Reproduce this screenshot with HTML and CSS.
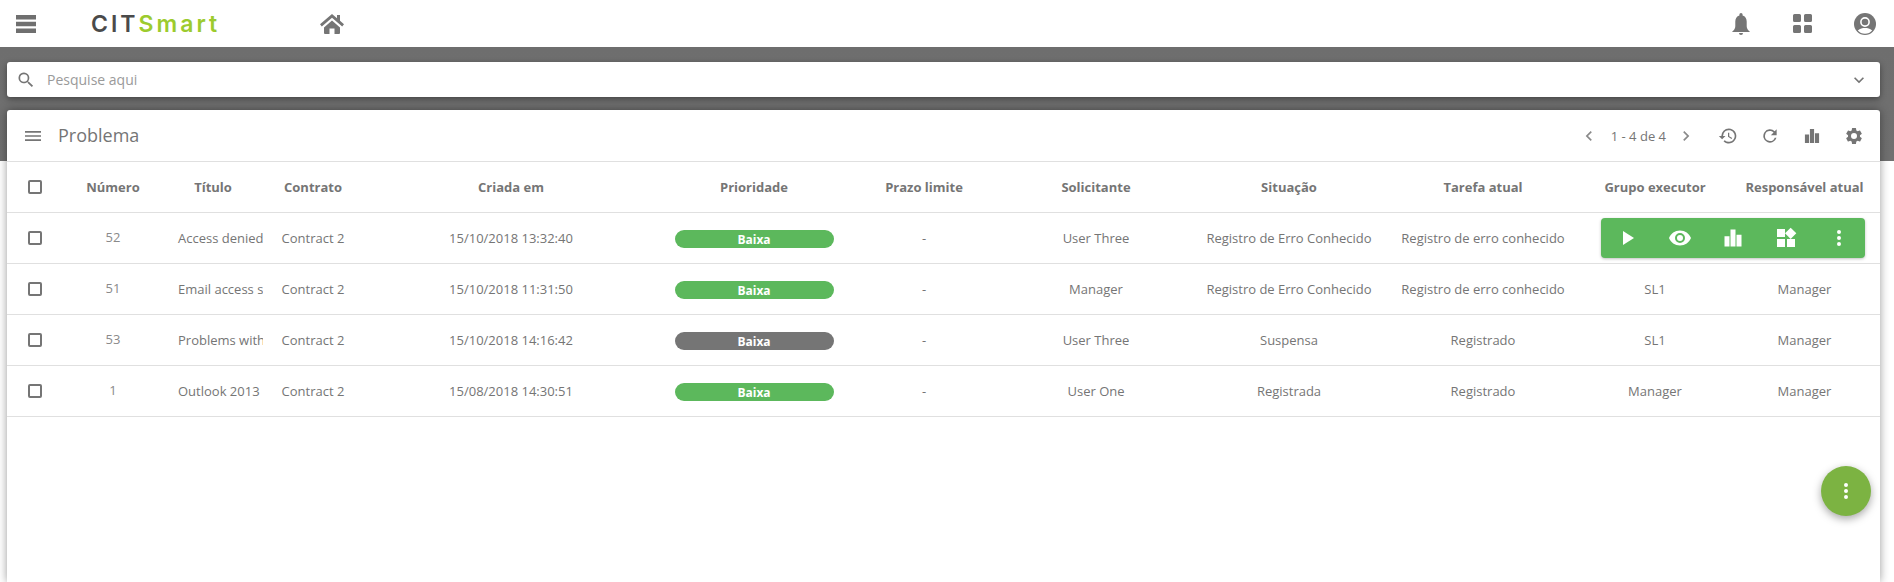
FILE: index.html
```html
<!DOCTYPE html>
<html lang="pt">
<head>
<meta charset="utf-8">
<title>Problema</title>
<link rel="stylesheet" href="styles.css">
</head>
<body>
<svg class="sprites" width="0" height="0" aria-hidden="true">
  <symbol id="i-history" viewBox="0 0 24 24"><path d="M13 3a9 9 0 0 0-9 9H1l3.89 3.89.07.14L9 12H6a7 7 0 1 1 2.05 4.95l-1.42 1.42A9 9 0 1 0 13 3zm-1 5v5l4.28 2.54.72-1.21-3.5-2.08V8H12z"/></symbol>
  <symbol id="i-refresh" viewBox="0 0 24 24"><path d="M17.65 6.35A8 8 0 1 0 19.73 14h-2.08A6 6 0 1 1 12 6c1.66 0 3.14.69 4.22 1.78L13 11h7V4l-2.35 2.35z"/></symbol>
  <symbol id="i-bars" viewBox="0 0 24 24"><path d="M3.500 10.200h5v10.300h-5zM9.500 3.500h5v17h-5zM15.500 8.800h5v11.700h-5z"/></symbol>
  <symbol id="i-gear" viewBox="0 0 24 24"><path d="M19.14 12.94c.04-.3.06-.61.06-.94s-.02-.64-.07-.94l2.03-1.58a.5.5 0 0 0 .12-.61l-1.92-3.32a.5.5 0 0 0-.59-.22l-2.39.96a7 7 0 0 0-1.62-.94l-.36-2.54a.48.48 0 0 0-.48-.41h-3.84a.47.47 0 0 0-.47.41l-.36 2.54c-.59.24-1.13.57-1.62.94l-2.39-.96a.48.48 0 0 0-.59.22L2.74 8.87a.47.47 0 0 0 .12.61l2.03 1.58c-.05.3-.09.63-.09.94s.02.64.07.94l-2.03 1.58a.5.5 0 0 0-.12.61l1.92 3.32c.12.22.37.29.59.22l2.39-.96c.5.38 1.03.7 1.62.94l.36 2.54c.05.24.24.41.48.41h3.84c.24 0 .44-.17.47-.41l.36-2.54a7 7 0 0 0 1.62-.94l2.39.96c.22.08.47 0 .59-.22l1.92-3.32a.46.46 0 0 0-.12-.61l-2.01-1.58zM12 15.6a3.6 3.6 0 1 1 0-7.2 3.6 3.6 0 0 1 0 7.2z"/></symbol>
  <symbol id="i-dots" viewBox="0 0 24 24"><path d="M12 8a2 2 0 1 0 0-4 2 2 0 0 0 0 4zm0 2a2 2 0 1 0 0 4 2 2 0 0 0 0-4zm0 6a2 2 0 1 0 0 4 2 2 0 0 0 0-4z"/></symbol>
</svg>

<header class="topbar">
  <div class="topbar-left">
    <svg class="ico-bars-top" viewBox="0 0 20 18"><path d="M0 0h20v4.400H0zM0 6.800h20v4.400H0zM0 13.600h20V18H0z"/></svg>
    <div class="logo"><span class="logo-dark">CIT</span><span class="logo-green">Smart</span></div>
    <svg class="ico-home" viewBox="0 0 24 20"><path d="M12 0 0 10.200l1.800 2.200L12 3.800l10.200 8.600 1.800-2.200-4-3.400V1h-3v3.200zM4 13.500l8-6.900 8 6.900V19a1 1 0 0 1-1 1h-4.500v-5.500h-5V20H5a1 1 0 0 1-1-1z"/></svg>
  </div>
  <div class="topbar-right">
    <svg class="ico-bell" viewBox="0 0 18 22"><path d="M9 0a1.600 1.600 0 0 0-1.600 1.600v.8C4.700 3.100 3.300 5.500 3.300 8.500v4.700C3.300 15.500 2 17 .3 18.500V19h17.400v-.5C16 17 14.700 15.500 14.700 13.200V8.500c0-3-1.400-5.400-4.100-6.100v-.8A1.600 1.600 0 0 0 9 0zM7 20a2 2 0 0 0 4 0z"/></svg>
    <svg class="ico-grid" viewBox="0 0 19 19"><path d="M1.500 0h5A1.500 1.500 0 0 1 8 1.500v5A1.500 1.500 0 0 1 6.500 8h-5A1.500 1.500 0 0 1 0 6.500v-5A1.500 1.500 0 0 1 1.500 0zm11 0h5A1.500 1.500 0 0 1 19 1.500v5A1.500 1.500 0 0 1 17.500 8h-5A1.500 1.500 0 0 1 11 6.500v-5A1.500 1.500 0 0 1 12.500 0zm-11 11h5A1.500 1.500 0 0 1 8 12.500v5A1.500 1.500 0 0 1 6.500 19h-5A1.500 1.500 0 0 1 0 17.500v-5A1.500 1.500 0 0 1 1.500 11zm11 0h5a1.500 1.500 0 0 1 1.500 1.500v5a1.500 1.500 0 0 1-1.500 1.500h-5a1.500 1.500 0 0 1-1.500-1.500v-5a1.500 1.500 0 0 1 1.500-1.500z"/></svg>
    <svg class="ico-user" viewBox="0 0 22 22"><circle cx="11" cy="11" r="11"/><circle class="user-ring" cx="11" cy="9" r="4.100"/><path class="user-arc" d="M3.800 17.500C6 15.600 8.500 15 11 15s5 .6 7.200 2.500c-1.700 2-4.300 3.300-7.200 3.300s-5.500-1.300-7.200-3.300z"/></svg>
  </div>
</header>

<main class="content">
  <div class="search">
    <svg class="ico-search" viewBox="0 0 24 24"><path d="M15.500 14h-.79l-.28-.27a6.500 6.500 0 1 0-.7.7l.27.28v.79l5 4.990L20.490 19l-4.990-5zm-6 0a4.500 4.500 0 1 1 0-9 4.500 4.500 0 0 1 0 9z"/></svg>
    <span class="search-text">Pesquise aqui</span>
    <svg class="ico-chevron" viewBox="0 0 24 24"><path d="M16.590 8.590 12 13.170 7.410 8.590 6 10l6 6 6-6z"/></svg>
  </div>

  <section class="card">
    <div class="card-head">
      <svg class="ico-menu" viewBox="0 0 16 10"><path d="M0 0h16v1.700H0zM0 4.150h16v1.700H0zM0 8.300h16V10H0z"/></svg>
      <h1 class="card-title">Problema</h1>
      <div class="tools">
        <svg class="ico-pager" viewBox="0 0 24 24"><path d="M15.410 7.410 14 6l-6 6 6 6 1.410-1.410L10.830 12z"/></svg>
        <span class="pager-text">1 - 4 de 4</span>
        <svg class="ico-pager" viewBox="0 0 24 24"><path d="M8.590 16.590 10 18l6-6-6-6-1.410 1.410L13.170 12z"/></svg>
        <svg class="ico-tool"><use href="#i-history"/></svg>
        <svg class="ico-tool"><use href="#i-refresh"/></svg>
        <svg class="ico-tool"><use href="#i-bars"/></svg>
        <svg class="ico-tool"><use href="#i-gear"/></svg>
      </div>
    </div>

    <div class="row row-head">
      <div class="cell"><span class="check"></span></div>
      <div class="cell">Número</div>
      <div class="cell">Título</div>
      <div class="cell">Contrato</div>
      <div class="cell">Criada em</div>
      <div class="cell">Prioridade</div>
      <div class="cell">Prazo limite</div>
      <div class="cell">Solicitante</div>
      <div class="cell">Situação</div>
      <div class="cell">Tarefa atual</div>
      <div class="cell">Grupo executor</div>
      <div class="cell">Responsável atual</div>
    </div>

    <div class="row">
      <div class="cell"><span class="check"></span></div>
      <div class="cell num">52</div>
      <div class="cell title">Access denied</div>
      <div class="cell">Contract 2</div>
      <div class="cell">15/10/2018 13:32:40</div>
      <div class="cell"><span class="pill">Baixa</span></div>
      <div class="cell">-</div>
      <div class="cell">User Three</div>
      <div class="cell">Registro de Erro Conhecido</div>
      <div class="cell">Registro de erro conhecido</div>
      <div class="cell"></div>
      <div class="cell"></div>
      <div class="actions">
        <svg class="ico-act" viewBox="0 0 24 24"><path d="M8 5v14l11-7z"/></svg>
        <svg class="ico-act" viewBox="0 0 24 24"><path d="M12 4.500C7 4.500 2.730 7.610 1 12c1.730 4.390 6 7.500 11 7.500s9.270-3.110 11-7.500c-1.730-4.390-6-7.500-11-7.500zM12 17a5 5 0 1 1 0-10 5 5 0 0 1 0 10zm0-8a3 3 0 1 0 0 6 3 3 0 0 0 0-6z"/></svg>
        <svg class="ico-act"><use href="#i-bars"/></svg>
        <svg class="ico-act" viewBox="0 0 24 24"><path d="M13 13v8h8v-8h-8zM3 21h8v-8H3v8zM3 3v8h8V3H3zm13.660-1.310L11 7.340 16.660 13l5.660-5.660-5.660-5.650z"/></svg>
        <svg class="ico-act"><use href="#i-dots"/></svg>
      </div>
    </div>

    <div class="row">
      <div class="cell"><span class="check"></span></div>
      <div class="cell num">51</div>
      <div class="cell title">Email access s</div>
      <div class="cell">Contract 2</div>
      <div class="cell">15/10/2018 11:31:50</div>
      <div class="cell"><span class="pill">Baixa</span></div>
      <div class="cell">-</div>
      <div class="cell">Manager</div>
      <div class="cell">Registro de Erro Conhecido</div>
      <div class="cell">Registro de erro conhecido</div>
      <div class="cell">SL1</div>
      <div class="cell">Manager</div>
    </div>

    <div class="row">
      <div class="cell"><span class="check"></span></div>
      <div class="cell num">53</div>
      <div class="cell title">Problems with</div>
      <div class="cell">Contract 2</div>
      <div class="cell">15/10/2018 14:16:42</div>
      <div class="cell"><span class="pill pill-grey">Baixa</span></div>
      <div class="cell">-</div>
      <div class="cell">User Three</div>
      <div class="cell">Suspensa</div>
      <div class="cell">Registrado</div>
      <div class="cell">SL1</div>
      <div class="cell">Manager</div>
    </div>

    <div class="row">
      <div class="cell"><span class="check"></span></div>
      <div class="cell num">1</div>
      <div class="cell title">Outlook 2013</div>
      <div class="cell">Contract 2</div>
      <div class="cell">15/08/2018 14:30:51</div>
      <div class="cell"><span class="pill">Baixa</span></div>
      <div class="cell">-</div>
      <div class="cell">User One</div>
      <div class="cell">Registrada</div>
      <div class="cell">Registrado</div>
      <div class="cell">Manager</div>
      <div class="cell">Manager</div>
    </div>

    <button class="fab" type="button" aria-label="Mais opções">
      <svg class="ico-fab"><use href="#i-dots"/></svg>
    </button>
  </section>
</main>
</body>
</html>
```

FILE: styles.css
```css
* { box-sizing: border-box; }

html, body {
  margin: 0;
  height: 100%;
  overflow: hidden;
}

body {
  display: flex;
  flex-direction: column;
  background: #fff;
  color: #757575;
  font-family: "Open Sans", "Liberation Sans", sans-serif;
  font-size: 12px;
}

.sprites { position: absolute; }

svg { fill: #757575; flex: none; display: block; }

.topbar {
  height: 47px;
  flex: none;
  display: flex;
  justify-content: space-between;
  align-items: center;
  background: #fff;
}

.topbar-left { display: flex; align-items: center; padding-left: 16px; }
.topbar-right { display: flex; align-items: center; padding-right: 18px; }

.ico-bars-top { width: 20px; height: 18px; fill: #6f6f6f; }

.logo {
  width: 229px;
  margin-left: 55px;
  font-family: "Inter", sans-serif;
  font-size: 23px;
  font-weight: 600;
  letter-spacing: 3px;
  line-height: 24px;
}
.logo-dark { color: #4a4a4a; }
.logo-green { color: #9ccb2e; }

.ico-home { width: 24px; height: 20px; }

.ico-bell { width: 18px; height: 22px; fill: #757575; }
.ico-grid { width: 19px; height: 19px; margin-left: 43px; }
.ico-user { width: 22px; height: 22px; margin-left: 42px; }
.user-ring { fill: #757575; stroke: #fff; stroke-width: 1.6px; }
.user-arc { fill: #fff; }

.content {
  flex: 1;
  min-height: 0;
  display: flex;
  flex-direction: column;
  gap: 13px;
  padding: 15px 14px 0 7px;
  background: linear-gradient(#6e6e6e, #707070) no-repeat top / 100% 114px;
}

.search {
  height: 35px;
  flex: none;
  display: flex;
  align-items: center;
  padding: 0 11px 0 9px;
  background: #fff;
  border-radius: 3px;
  box-shadow: 0 2px 6px rgba(0, 0, 0, .4);
}

.ico-search { width: 20px; height: 20px; }

.search-text {
  flex: 1;
  margin-left: 11px;
  font-size: 14px;
  color: #9a9a9a;
}

.ico-chevron { width: 20px; height: 20px; }

.card {
  position: relative;
  flex: 1;
  min-height: 0;
  background: #fff;
  border-radius: 3px 3px 0 0;
  box-shadow: 0 0 10px rgba(0, 0, 0, .4);
}

.card-head {
  height: 52px;
  display: flex;
  align-items: center;
  padding: 0 16px 0 18px;
  border-bottom: 1px solid #e0e0e0;
}

.ico-menu { width: 16px; height: 10px; }

.card-title {
  flex: 1;
  margin: 0 0 2px 17px;
  font-size: 18px;
  font-weight: 400;
  color: #757575;
}

.tools { display: flex; align-items: center; }

.ico-pager { width: 20px; height: 20px; fill: #8a8a8a; }

.pager-text {
  margin: 0 10px 0 12px;
  font-size: 13px;
  color: #757575;
}

.ico-tool { width: 20px; height: 20px; margin-left: 22px; }

.row {
  position: relative;
  height: 51px;
  display: grid;
  grid-template-columns: 56px 100px 100px 100px 296px 190px 150px 194px 192px 196px 148px 151px;
  align-items: center;
  border-bottom: 1px solid #e0e0e0;
  font-size: 13px;
}

.cell {
  display: flex;
  justify-content: center;
  align-items: center;
  white-space: nowrap;
  overflow: hidden;
}

.row-head { font-weight: 700; color: #757575; }

.row .title {
  justify-content: flex-start;
  padding-left: 15px;
}

.num { color: #8a8a8a; padding-bottom: 2px; }

.check {
  width: 14px;
  height: 14px;
  border: 2px solid #757575;
  border-radius: 2px;
}

.pill {
  width: 159px;
  height: 18px;
  margin-top: 2px;
  border-radius: 9px;
  display: flex;
  align-items: center;
  justify-content: center;
  background: #5cb85c;
  color: #fff;
  font-size: 12px;
  font-weight: 700;
}

.pill-grey { background: #757575; }

.actions {
  position: absolute;
  top: 5px;
  left: 1594px;
  width: 264px;
  height: 40px;
  display: flex;
  align-items: center;
  justify-content: space-around;
  background: #5cb85c;
  border-radius: 4px;
  box-shadow: 0 1px 3px rgba(0, 0, 0, .25);
}

.ico-act { width: 24px; height: 24px; fill: #fff; }

.fab {
  position: absolute;
  left: 1814px;
  top: 356px;
  width: 50px;
  height: 50px;
  display: flex;
  align-items: center;
  justify-content: center;
  padding: 0;
  border: 0;
  border-radius: 50%;
  background: #7cb342;
  box-shadow: 0 3px 8px rgba(0, 0, 0, .35);
}

.ico-fab { width: 24px; height: 24px; fill: #fff; }
```
